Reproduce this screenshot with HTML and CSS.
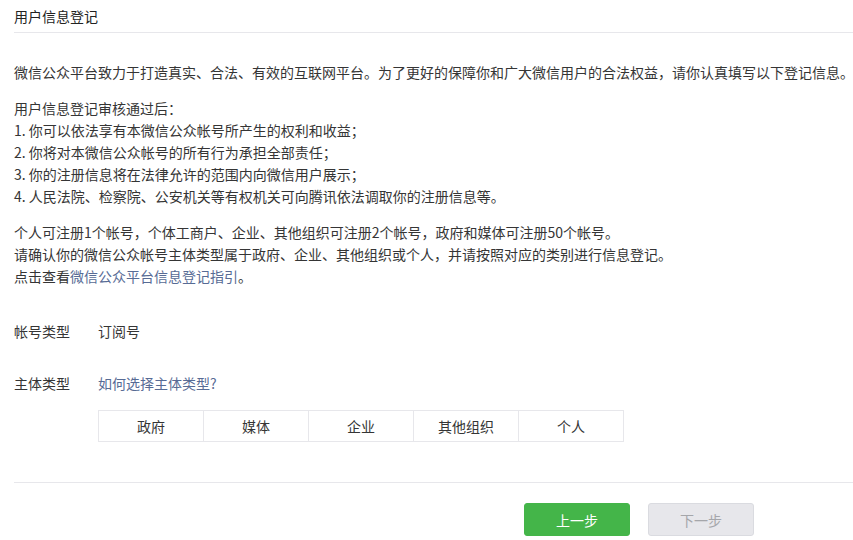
FILE: index.html
```html
<!DOCTYPE html>
<html lang="zh-CN">
<head>
<meta charset="utf-8">
<title>用户信息登记</title>
<link rel="stylesheet" href="styles.css">
</head>
<body>
<div class="page">
  <div class="page-head">
    <h2 class="page-title">用户信息登记</h2>
  </div>
  <div class="intro">
    <p class="para para-lead">微信公众平台致力于打造真实、合法、有效的互联网平台。为了更好的保障你和广大微信用户的合法权益，请你认真填写以下登记信息。</p>
    <p class="para">用户信息登记审核通过后：<br>1. 你可以依法享有本微信公众帐号所产生的权利和收益；<br>2. 你将对本微信公众帐号的所有行为承担全部责任；<br>3. 你的注册信息将在法律允许的范围内向微信用户展示；<br>4. 人民法院、检察院、公安机关等有权机关可向腾讯依法调取你的注册信息等。</p>
    <p class="para">个人可注册1个帐号，个体工商户、企业、其他组织可注册2个帐号，政府和媒体可注册50个帐号。<br>请确认你的微信公众帐号主体类型属于政府、企业、其他组织或个人，并请按照对应的类别进行信息登记。<br>点击查看<a class="link" href="#">微信公众平台信息登记指引</a>。</p>
  </div>
  <div class="form">
    <div class="form-row row-account">
      <div class="label">帐号类型</div>
      <div class="value">订阅号</div>
    </div>
    <div class="form-row row-subject">
      <div class="label">主体类型</div>
      <div class="value">
        <a class="link" href="#">如何选择主体类型?</a>
        <div class="type-group">
          <span class="type-btn">政府</span>
          <span class="type-btn">媒体</span>
          <span class="type-btn">企业</span>
          <span class="type-btn">其他组织</span>
          <span class="type-btn">个人</span>
        </div>
      </div>
    </div>
  </div>
  <div class="actions">
    <button class="btn btn-primary">上一步</button>
    <button class="btn btn-disabled" disabled>下一步</button>
  </div>
</div>
</body>
</html>
```

FILE: styles.css
```css
* { box-sizing: border-box; }
html, body {
  margin: 0;
  padding: 0;
  background: #fff;
  overflow: hidden;
}
body {
  font-family: "Microsoft YaHei", "Noto Sans CJK SC", "Noto Sans", sans-serif;
  font-size: 14px;
  color: #353535;
}
.page {
  padding: 0 0 0 14px;
}
.page-head {
  border-bottom: 1px solid #e7e7eb;
}
.page-title {
  margin: 0;
  font-size: 14px;
  font-weight: normal;
  line-height: 32px;
  color: #222;
}
.intro {
  padding-top: 28px;
}
.para {
  margin: 0 0 14px;
  line-height: 22px;
}
.para-lead {
  white-space: nowrap;
}
.link {
  color: #576b95;
  text-decoration: none;
}
.form {
  padding-top: 19px;
}
.form-row {
  display: flex;
  line-height: 22px;
}
.row-account {
  margin-bottom: 30px;
}
.label {
  width: 84px;
  flex: none;
}
.type-group {
  display: flex;
  margin-top: 16px;
}
.type-btn {
  width: 106px;
  height: 32px;
  line-height: 30px;
  text-align: center;
  border: 1px solid #e7e7eb;
  margin-left: -1px;
}
.type-btn:first-child {
  margin-left: 0;
}
.actions {
  margin-top: 40px;
  border-top: 1px solid #e7e7eb;
  padding-top: 20px;
  padding-left: 510px;
  display: flex;
  gap: 18px;
}
.btn {
  width: 106px;
  height: 33px;
  border-radius: 3px;
  font-family: inherit;
  font-size: 14px;
  padding: 0;
  cursor: pointer;
}
.btn-primary {
  background: #44b549;
  border: 1px solid #44b549;
  color: #fff;
}
.btn-disabled {
  background: #e7e7eb;
  border: 1px solid #dadbe0;
  color: #a5a6aa;
  cursor: default;
}
```
